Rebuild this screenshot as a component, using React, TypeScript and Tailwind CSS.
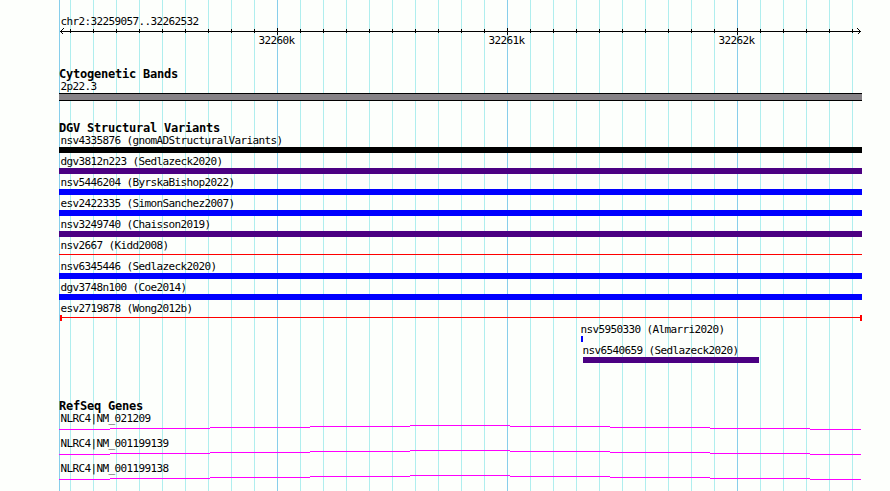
type Variant = {
  name: string;
  label: string;
  glyph: string;
  line?: boolean;
};

// one grid line every 23px, the first one 11px after the start of the region
const ticks = Array.from({ length: 35 }, (_, i) => i);
const isMajor = (i: number) => i % 10 === 9;

const positions = ["32260k", "32261k", "32262k"];

const variants: Variant[] = [
  { name: "nsv4335876 (gnomADStructuralVariants)", label: "pl-[1.5px]", glyph: "h-1.5 bg-black" },
  { name: "dgv3812n223 (Sedlazeck2020)", label: "pl-[1.5px]", glyph: "h-1.5 bg-[#4b0082]" },
  { name: "nsv5446204 (ByrskaBishop2022)", label: "pl-[1.5px]", glyph: "h-1.5 bg-[#0000ff]" },
  { name: "esv2422335 (SimonSanchez2007)", label: "pl-[1.5px]", glyph: "h-1.5 bg-[#0000ff]" },
  { name: "nsv3249740 (Chaisson2019)", label: "pl-[1.5px]", glyph: "h-1.5 bg-[#4b0082]" },
  { name: "nsv2667 (Kidd2008)", label: "pl-[1.5px]", glyph: "mt-0.5 h-px bg-[#ff0000]" },
  { name: "nsv6345446 (Sedlazeck2020)", label: "pl-[1.5px]", glyph: "h-1.5 bg-[#0000ff]" },
  { name: "dgv3748n100 (Coe2014)", label: "pl-[1.5px]", glyph: "h-1.5 bg-[#0000ff]" },
  { name: "esv2719878 (Wong2012b)", label: "pl-[1.5px]", glyph: "ml-px h-1.5 border-x-2 border-[#ff0000] pt-0.5", line: true },
  { name: "nsv5950330 (Almarri2020)", label: "pl-[521.5px]", glyph: "ml-[522px] h-1.5 w-0.5 bg-[#0000ff]" },
  { name: "nsv6540659 (Sedlazeck2020)", label: "pl-[523.5px]", glyph: "ml-[524px] h-1.5 w-44 bg-[#4b0082]" },
];

const genes = ["NLRC4|NM_021209", "NLRC4|NM_001199139", "NLRC4|NM_001199138"];

function GridLines() {
  return (
    <div className="absolute inset-y-0 left-[59px] flex border-l border-[#87ceeb] pl-2.5">
      {ticks.map((i) => (
        <div key={i} className={`w-[23px] border-l ${isMajor(i) ? "border-[#87ceeb]" : "border-[#afeeee]"}`} />
      ))}
    </div>
  );
}

function Ruler() {
  return (
    <svg className="block h-2 w-[803px]" viewBox="0 0 803 8" fill="none" stroke="#000" shapeRendering="crispEdges">
      <path d="M1 3.5H802" />
      {ticks.map((i) => (
        <path key={i} d={isMajor(i) ? `M${11.5 + i * 23} 0V7` : `M${11.5 + i * 23} 1V5`} />
      ))}
      <path d="M4.5 0.5L1.5 3.5L4.5 6.5M798.5 0.5L801.5 3.5L798.5 6.5" />
    </svg>
  );
}

function Heading({ children }: { children: string }) {
  return <h2 className="h-3 text-[12px] leading-3 font-bold tracking-[-0.224px]">{children}</h2>;
}

function Gene({ name }: { name: string }) {
  return (
    <div className="h-[25px]">
      <div className="h-[13px] pt-px pl-[1.5px]">{name}</div>
      <svg className="block h-[5px] w-[803px]" viewBox="0 0 803 5" stroke="#ff00ff" shapeRendering="crispEdges">
        <path d="M0 4.5H51M51 3.5H151M151 2.5H251M251 1.5H351M351 0.5H451M451 1.5H551M551 2.5H651M651 3.5H751M751 4.5H802" />
      </svg>
    </div>
  );
}

export default function App() {
  return (
    <div className="relative h-[491px] w-[890px] overflow-hidden bg-[#fdfffc] font-['DejaVu_Sans_Mono',monospace] text-[11px] leading-3 tracking-[-0.622px] whitespace-pre text-black">
      <GridLines />
      <main className="relative ml-[59px] w-[803px] pt-[15px]">
        <section className="h-[53px]">
          <div className="h-[13px] pt-px pl-[1.5px]">chr2:32259057..32262532</div>
          <Ruler />
          <div className="-mt-px flex gap-[194px] pl-[199.5px]">
            {positions.map((p) => (
              <span key={p} className="w-9">{p}</span>
            ))}
          </div>
        </section>

        <section className="h-[54px]">
          <Heading>Cytogenetic Bands</Heading>
          <div className="h-[13px] pt-px pl-[1.5px]">2p22.3</div>
          <div className="h-2 border-y border-black bg-[#868286]" />
        </section>

        <section className="h-[278px]">
          <Heading>DGV Structural Variants</Heading>
          {variants.map((v) => (
            <div key={v.name} className="h-[21px]">
              <div className={`h-[13px] pt-px ${v.label}`}>{v.name}</div>
              <div className={v.glyph}>{v.line && <div className="h-px bg-[#ff0000]" />}</div>
            </div>
          ))}
        </section>

        <section>
          <Heading>RefSeq Genes</Heading>
          {genes.map((g) => (
            <Gene key={g} name={g} />
          ))}
        </section>
      </main>
    </div>
  );
}
